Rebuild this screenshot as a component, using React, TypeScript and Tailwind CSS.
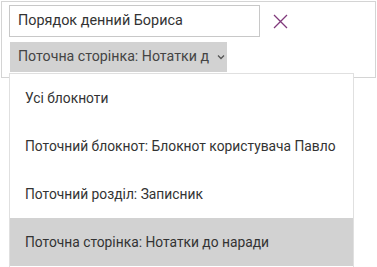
import React from "react";

const font = { fontFamily: 'Roboto, "Noto Sans", sans-serif' };

export default function App() {
  const items = [
    "Усі блокноти",
    "Поточний блокнот: Блокнот користувача Павло",
    "Поточний розділ: Записник",
    "Поточна сторінка: Нотатки до наради",
  ];
  return (
    <div className="relative w-[377px] h-[267px] bg-white overflow-hidden text-[#333]" style={font}>
      <div className="ml-px mt-px w-[375px] h-[77px] border border-[#d4d4d4] px-[7px] pt-[3px]">
        <div className="flex items-center">
          <div className="w-[251px] h-[32px] border border-[#c8c8c8] flex items-center pl-[8px] text-[14.4px] text-[#333]">
            Порядок денний Бориса
          </div>
          <svg className="ml-[13px]" width="15" height="15" viewBox="0 0 15 15">
            <path d="M1 1 L14 14 M14 1 L1 14" stroke="#80397b" strokeWidth="1.3" fill="none" />
          </svg>
        </div>
        <div className="mt-[5px] ml-px w-[217px] h-[30px] bg-[#d2d2d2] flex items-center pl-[8px] text-[14.2px] text-[#444]">
          <span className="whitespace-nowrap">Поточна сторінка: Нотатки д</span>
          <svg className="ml-[8px]" width="8" height="6" viewBox="0 0 8 6">
            <path d="M1 1.5 L4 4.5 L7 1.5" stroke="#555" strokeWidth="1.3" fill="none" />
          </svg>
        </div>
      </div>
      <div className="absolute left-[9px] top-[73px] w-[345px] bg-white border border-[#e0e0e0] border-b-0 pb-px">
        {items.map((t, i) => (
          <div
            key={i}
            className={`h-[48px] flex items-center pl-[15px] text-[13.8px] text-[#333] ${i === 3 ? "bg-[#d2d2d2]" : ""}`}
          >
            {t}
          </div>
        ))}
      </div>
    </div>
  );
}
